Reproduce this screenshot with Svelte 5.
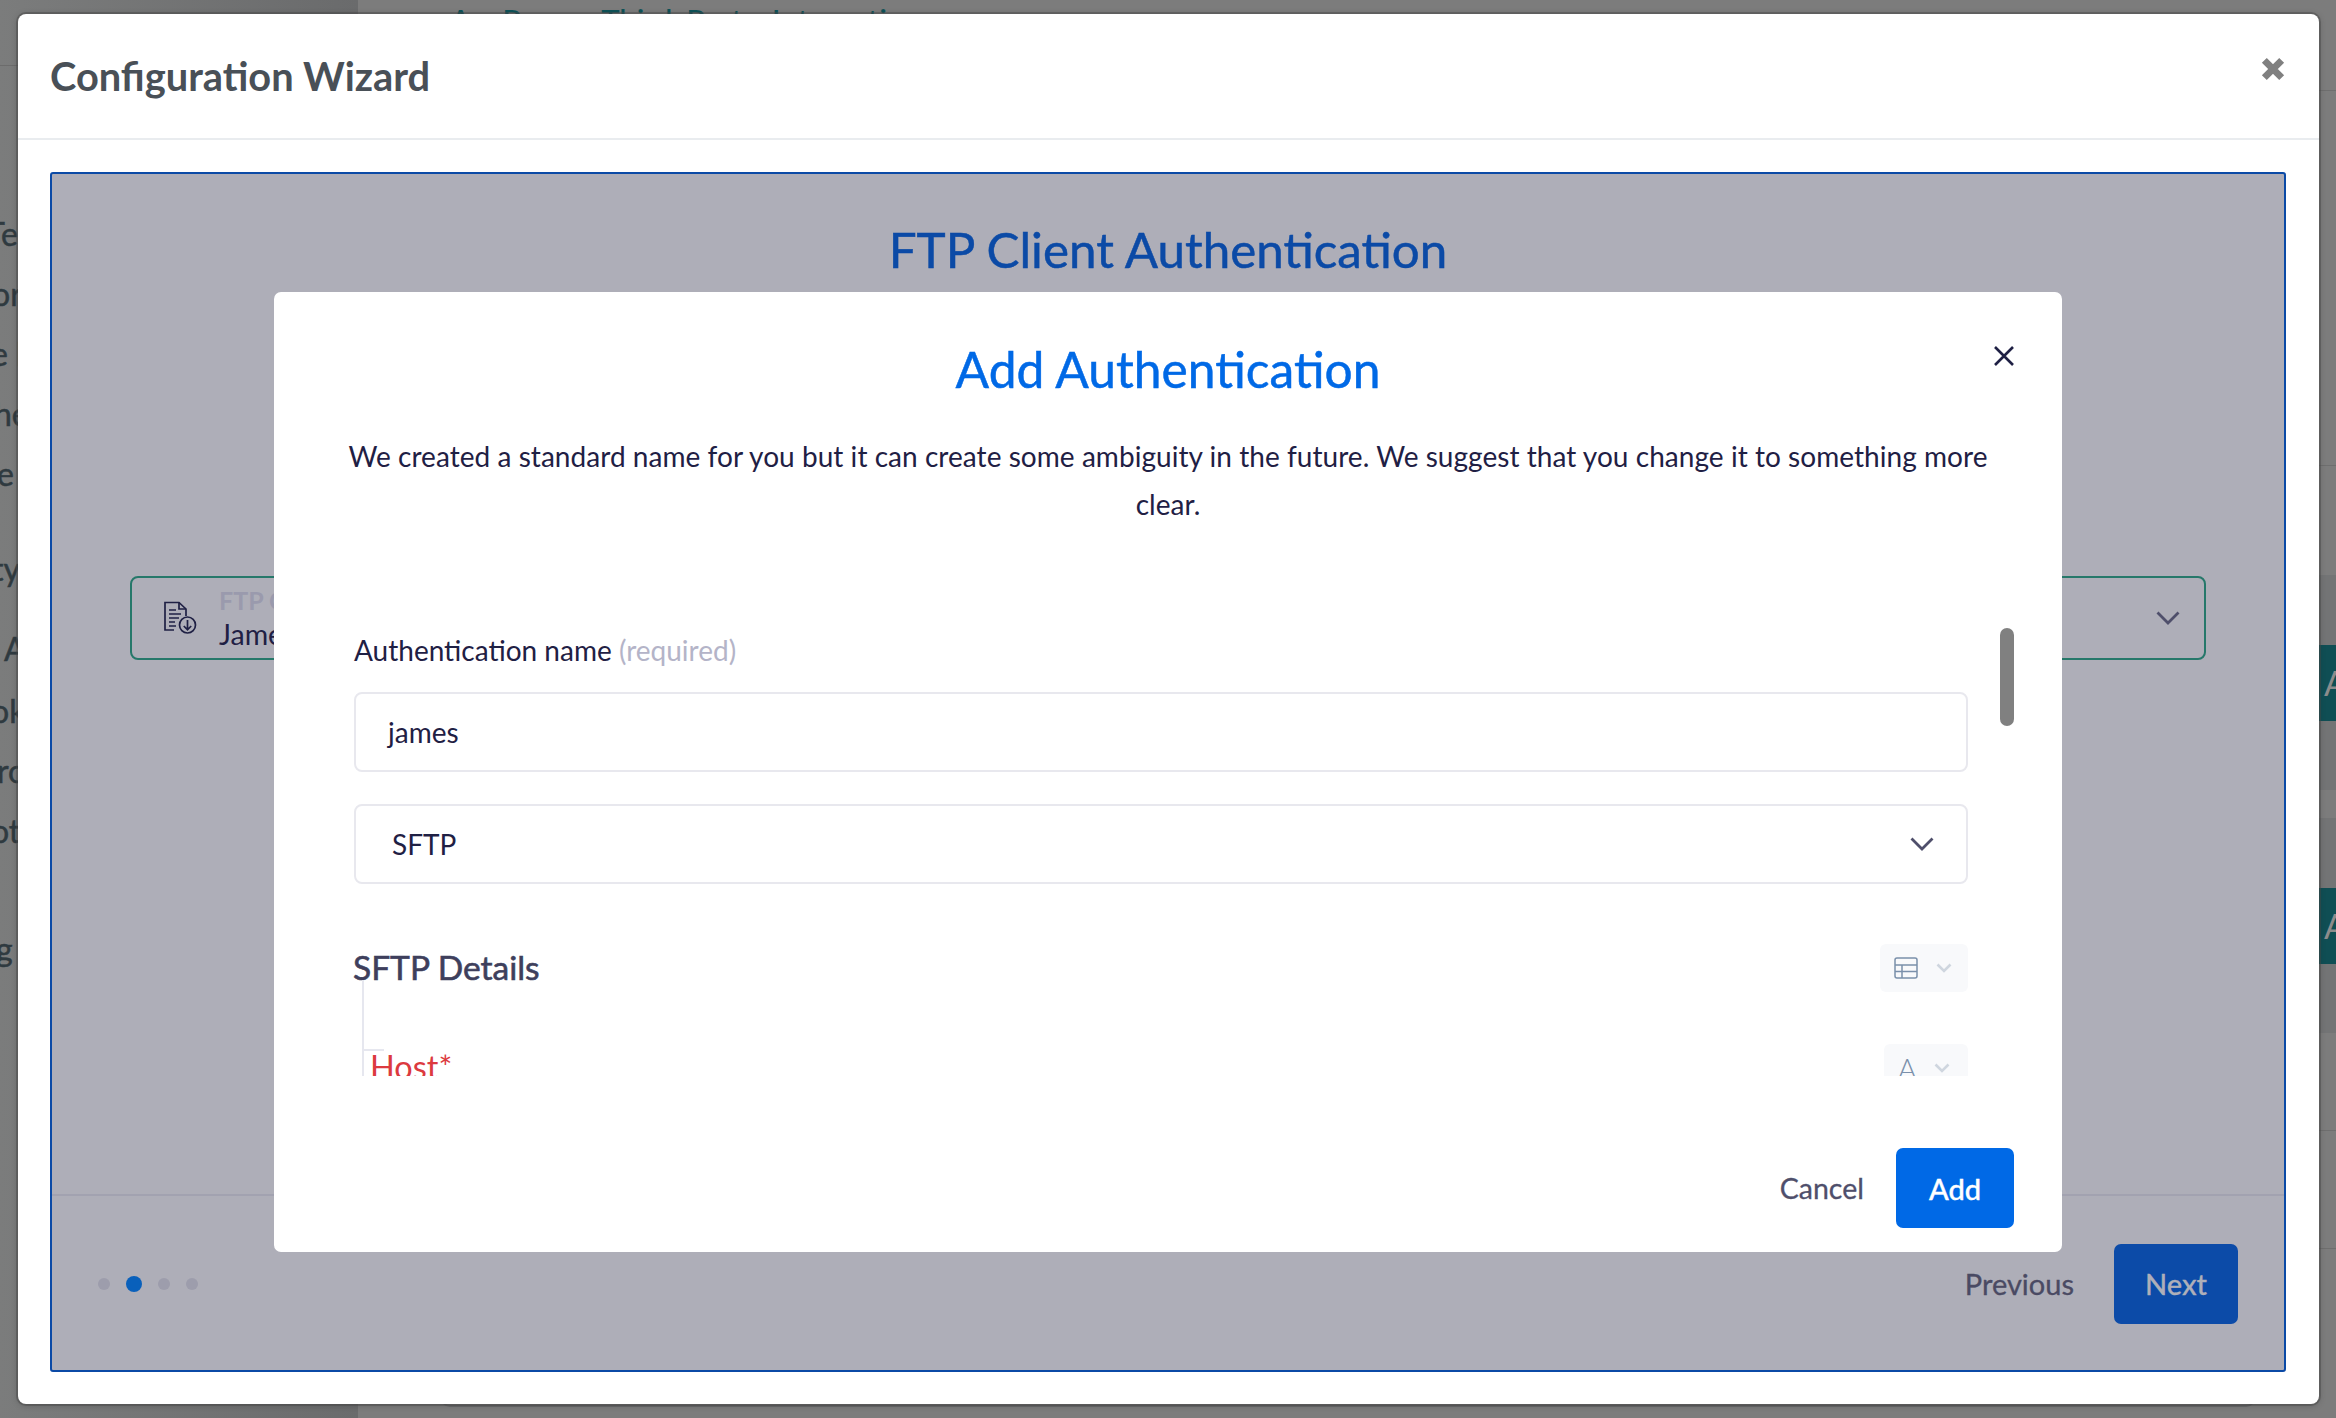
<script>
  const leftRows = [
    { text: 'Te', gap: 0, shift: -14 },
    { text: 'or', gap: 0, shift: -8 },
    { text: 'e l', gap: 0, shift: -9 },
    { text: 'he', gap: 0, shift: -6 },
    { text: 'e', gap: 0, shift: -3 },
    { text: 'ty', gap: 35, shift: -8 },
    { text: 'A', gap: 20, shift: 4 },
    { text: 'ok', gap: 2, shift: -9 },
    { text: 'ro', gap: 0, shift: -3 },
    { text: 'ot', gap: 0, shift: -9 },
    { text: 'g', gap: 58, shift: -4 }
  ];
  const dots = [false, true, false, false];
</script>

<div class="page">
  <div class="backdrop">
    <aside class="side">
      <div class="side-rule"></div>
      {#each leftRows as row}
        <div class="side-row" style="margin-top: {row.gap}px; margin-left: {row.shift}px">{row.text}</div>
      {/each}
    </aside>
    <main class="content">
      <div class="content-title">Ap Param Third Party Integration</div>
      <div class="content-card"></div>
    </main>
    <div class="right-strip">
      <div class="r-line r1"></div>
      <div class="r-line r2"></div>
      <div class="r-panel"><div class="r-btn">A</div></div>
      <div class="r-panel second"><div class="r-btn">A</div></div>
      <div class="r-line r3"></div>
      <div class="r-line r4"></div>
    </div>
  </div>

  <section class="wizard-modal">
    <header class="wizard-head">
      <h2>Configuration Wizard</h2>
      <svg class="wizard-close" viewBox="0 0 24 24" width="26" height="26">
        <path d="M4 4 L20 20 M20 4 L4 20" stroke="#808080" stroke-width="6.4" fill="none" />
      </svg>
    </header>
    <div class="wizard-body">
      <div class="wizard">
        <div class="wizard-main">
          <h1>FTP Client Authentication</h1>
          <div class="picker">
            <svg class="doc" viewBox="0 0 34 34" width="34" height="34" fill="none" stroke="#1f2044" stroke-width="1.7">
              <path d="M10 29 H1 V1.5 H15 L22 8 V15" />
              <path d="M15 1.5 V8 H22" />
              <path d="M5 9 H12 M5 13 H17 M5 17 H15 M5 21 H11 M5 25 H12" />
              <circle cx="23.5" cy="24" r="8" />
              <path d="M23.5 19 V28.5 M19.8 25 L23.5 28.8 L27.2 25" />
            </svg>
            <div class="picker-text">
              <span class="picker-label">FTP Client</span>
              <span class="picker-value">James</span>
            </div>
            <svg class="picker-chev" viewBox="0 0 24 14" width="24" height="14">
              <path d="M1.5 1.5 L12 12 L22.5 1.5" fill="none" stroke="#4f4f6b" stroke-width="2.8" />
            </svg>
          </div>
        </div>
        <footer class="wizard-foot">
          <div class="dots">
            {#each dots as on}
              <span class="dot" class:on></span>
            {/each}
          </div>
          <div class="foot-actions">
            <span class="prev">Previous</span>
            <button class="next">Next</button>
          </div>
        </footer>
      </div>
    </div>
  </section>

  <section class="auth-modal">
    <svg class="auth-close" viewBox="0 0 22 22" width="22" height="22">
      <path d="M2 2 L20 20 M20 2 L2 20" stroke="#1f2044" stroke-width="2.6" fill="none" />
    </svg>
    <h2 class="auth-title">Add Authentication</h2>
    <p class="auth-text">We created a standard name for you but it can create some ambiguity in the future. We suggest that you change it to something more clear.</p>

    <div class="scroll">
      <div class="thumb"></div>
      <div class="field-label">Authentication name <span class="req">(required)</span></div>
      <div class="input">james</div>
      <div class="input select">
        <span>SFTP</span>
        <svg viewBox="0 0 24 14" width="24" height="14">
          <path d="M1.5 1.5 L12 12 L22.5 1.5" fill="none" stroke="#4f4f6b" stroke-width="2.8" />
        </svg>
      </div>
      <div class="details-row">
        <h3>SFTP Details</h3>
        <div class="type-btn">
          <svg viewBox="0 0 24 22" width="24" height="22" fill="none" stroke="#7a90ab" stroke-width="1.5">
            <rect x="1" y="1" width="22" height="20" rx="2" />
            <path d="M1 8 H23 M1 14.5 H23 M8 8 V21" />
          </svg>
          <svg class="mini" viewBox="0 0 16 10" width="16" height="10">
            <path d="M1.5 1.5 L8 8 L14.5 1.5" fill="none" stroke="#cfd6df" stroke-width="2.6" />
          </svg>
        </div>
      </div>
      <div class="tree">
        <div class="host-row">
          <span class="host">Host*</span>
          <div class="type-btn small">
            <span class="type-a">A</span>
            <svg class="mini" viewBox="0 0 16 10" width="16" height="10">
              <path d="M1.5 1.5 L8 8 L14.5 1.5" fill="none" stroke="#cfd6df" stroke-width="2.6" />
            </svg>
          </div>
        </div>
      </div>
    </div>

    <div class="auth-foot">
      <span class="cancel">Cancel</span>
      <button class="add">Add</button>
    </div>
  </section>
</div>

<style>
  :global(body) {
    margin: 0;
    background: #7b7b7b;
  }

  .page {
    position: relative;
    width: 2336px;
    height: 1418px;
    overflow: hidden;
    font-family: Lato, "Open Sans", sans-serif;
    color: #1f2044;
  }

  .backdrop {
    display: flex;
    height: 100%;
    background: #7c7c7c;
  }

  .side {
    width: 358px;
    flex-shrink: 0;
    overflow: hidden;
    position: relative;
    box-sizing: border-box;
    padding-top: 204px;
    background: linear-gradient(90deg, #7b7c7c 0%, #6a6b6c 100%);
    color: #2f3a40;
    font-size: 32px;
    -webkit-text-stroke: 0.5px #2f3a40;
  }

  .side-rule {
    position: absolute;
    left: 0;
    right: 0;
    top: 65px;
    height: 1px;
    background: #6c6c6c;
  }

  .side-row {
    height: 60px;
    line-height: 60px;
  }

  .content {
    flex: 1;
    box-sizing: border-box;
    padding: 2px 0 0 92px;
    position: relative;
  }

  .content-title {
    color: #0d5258;
    font-size: 31px;
    line-height: 36px;
    font-weight: 500;
    word-spacing: 6px;
  }

  .content-card {
    position: absolute;
    left: 82px;
    right: 80px;
    top: 1300px;
    height: 107px;
    border: 2px solid #676869;
    border-radius: 10px;
    box-sizing: border-box;
  }

  .right-strip {
    position: absolute;
    left: 2319px;
    right: 0;
    top: 0;
    bottom: 0;
    overflow: hidden;
  }

  .r-line {
    position: absolute;
    left: 0;
    right: 0;
    height: 1px;
    background: #6e6e6e;
  }

  .r1 { top: 90px; }
  .r2 { top: 465px; }
  .r3 { top: 1130px; }
  .r4 { top: 1248px; }

  .r-panel {
    position: absolute;
    left: 0;
    right: 0;
    top: 575px;
    height: 215px;
    background: #737475;
    display: flex;
    align-items: center;
  }

  .r-panel.second {
    top: 818px;
  }

  .r-btn {
    width: 100%;
    height: 76px;
    background: #0f4e54;
    color: #8c8c8c;
    font-size: 34px;
    line-height: 76px;
    padding-left: 5px;
    box-sizing: border-box;
  }

  .wizard-modal {
    position: absolute;
    left: 18px;
    top: 14px;
    width: 2301px;
    height: 1390px;
    box-sizing: border-box;
    background: #fff;
    border-radius: 8px;
    box-shadow: 0 0 0 2px rgba(70, 70, 70, 0.45), 0 1px 6px rgba(40, 40, 40, 0.35);
    display: flex;
    flex-direction: column;
  }

  .wizard-head {
    height: 126px;
    flex-shrink: 0;
    box-sizing: border-box;
    border-bottom: 2px solid #e9ecef;
    position: relative;
    padding: 36px 33px 0 32px;
  }

  .wizard-head h2 {
    margin: 0;
    font-size: 39.8px;
    line-height: 52px;
    font-weight: 700;
    color: #495057;
  }

  .wizard-close {
    position: absolute;
    right: 33px;
    top: 42px;
  }

  .wizard-body {
    flex: 1;
    padding: 32px 33px 32px 32px;
    display: flex;
    min-height: 0;
  }

  .wizard {
    flex: 1;
    border: 2px solid #0b4aa6;
    border-radius: 3px;
    background: #aeaeb8;
    display: flex;
    flex-direction: column;
  }

  .wizard-main {
    flex: 1;
    padding: 45px 78px 0;
  }

  .wizard-main h1 {
    margin: 0;
    text-align: center;
    font-size: 49.3px;
    line-height: 60px;
    font-weight: 400;
    color: #0b4aa6;
    -webkit-text-stroke: 0.5px #0b4aa6;
  }

  .picker {
    margin-top: 297px;
    height: 84px;
    box-sizing: border-box;
    border: 2px solid #26786a;
    border-radius: 8px;
    display: flex;
    align-items: center;
    padding: 0 24px 0 32px;
  }

  .doc {
    flex-shrink: 0;
  }

  .picker-text {
    flex: 1;
    margin-left: 21px;
    display: flex;
    flex-direction: column;
    line-height: 1;
  }

  .picker-label {
    font-size: 25px;
    font-weight: 700;
    color: #9a9aad;
    margin-bottom: 7px;
  }

  .picker-value {
    font-size: 28.5px;
    color: #1f2044;
  }

  .wizard-foot {
    height: 176px;
    flex-shrink: 0;
    box-sizing: border-box;
    border-top: 2px solid #a2a2b0;
    display: flex;
    align-items: center;
    justify-content: space-between;
    padding: 2px 46px 0;
  }

  .dots {
    display: flex;
    align-items: center;
    gap: 16px;
  }

  .dot {
    width: 12px;
    height: 12px;
    border-radius: 50%;
    background: #9d9dac;
  }

  .dot.on {
    width: 16px;
    height: 16px;
    background: #0960bb;
  }

  .foot-actions {
    display: flex;
    align-items: center;
    gap: 40px;
  }

  .prev {
    font-size: 29px;
    margin-top: -2px;
    color: #4a4a63;
    -webkit-text-stroke: 0.3px #4a4a63;
  }

  .next {
    width: 124px;
    height: 80px;
    border: 0;
    padding: 0 0 2px;
    border-radius: 7px;
    background: #0c4ba8;
    color: #aeafb9;
    font: 500 29px Lato, sans-serif;
    -webkit-text-stroke: 0.3px #aeafb9;
  }

  .auth-modal {
    position: absolute;
    left: 274px;
    top: 292px;
    width: 1788px;
    height: 960px;
    box-sizing: border-box;
    background: #fff;
    border-radius: 7px;
    display: flex;
    flex-direction: column;
  }

  .auth-close {
    position: absolute;
    left: 1719px;
    top: 53px;
  }

  .auth-title {
    margin: 48px 0 0;
    text-align: center;
    font-size: 49.7px;
    line-height: 58px;
    font-weight: 400;
    color: #0069e6;
    -webkit-text-stroke: 0.5px #0069e6;
  }

  .auth-text {
    margin: 34px 46px 0;
    text-align: center;
    font-size: 28px;
    line-height: 48px;
    letter-spacing: 0.045px;
    color: #1f2044;
  }

  .scroll {
    position: relative;
    height: 456px;
    margin-top: 92px;
    padding: 0 94px 0 80px;
    overflow: hidden;
  }

  .thumb {
    position: absolute;
    left: 1726px;
    top: 8px;
    width: 14px;
    height: 98px;
    border-radius: 7px;
    background: #808080;
  }

  .field-label {
    font-size: 28px;
    line-height: 40px;
    margin-top: 10px;
  }

  .req {
    color: #b4b4c8;
  }

  .input {
    margin-top: 22px;
    height: 80px;
    box-sizing: border-box;
    border: 2px solid #e8e8ee;
    border-radius: 8px;
    padding: 0 32px;
    display: flex;
    align-items: center;
    font-size: 28px;
  }

  .select {
    margin-top: 32px;
    padding: 0 32px 0 36px;
    justify-content: space-between;
  }

  .details-row {
    margin-top: 60px;
    display: flex;
    align-items: center;
    justify-content: space-between;
  }

  .details-row h3 {
    margin: -2px 0 0 -1px;
    font-size: 33.5px;
    font-weight: 400;
    color: #3e3f5c;
    -webkit-text-stroke: 0.6px #3e3f5c;
  }

  .type-btn {
    width: 88px;
    height: 48px;
    box-sizing: border-box;
    background: #f8f9fb;
    border-radius: 6px;
    display: flex;
    align-items: center;
    padding-left: 14px;
    gap: 18px;
  }

  .type-btn.small {
    width: 84px;
    padding-left: 16px;
  }

  .type-a {
    font-size: 28px;
    font-weight: 300;
    color: #7a90ab;
    width: 16px;
    margin-left: -2px;
    margin-right: 2px;
  }

  .tree {
    margin-left: 8px;
    border-left: 2px solid #e6e7ef;
    height: 120px;
    margin-top: -12px;
    padding-top: 64px;
    box-sizing: border-box;
    position: relative;
  }

  .tree::before {
    content: '';
    position: absolute;
    left: 0;
    top: 69px;
    width: 20px;
    height: 2px;
    background: #e6e7ef;
  }

  .host-row {
    display: flex;
    align-items: flex-start;
    justify-content: space-between;
  }

  .host {
    font-size: 32.5px;
    line-height: 44px;
    margin: 1px 0 0 6px;
    color: #dc3a3f;
  }

  .auth-foot {
    margin-top: auto;
    padding: 0 48px 24px 0;
    display: flex;
    align-items: center;
    justify-content: flex-end;
    gap: 32px;
  }

  .cancel {
    font-size: 28.5px;
    color: #4f4f6b;
    -webkit-text-stroke: 0.3px #4f4f6b;
  }

  .add {
    width: 118px;
    height: 80px;
    border: 0;
    border-radius: 7px;
    background: #0069e6;
    color: #fff;
    font: 500 29px Lato, sans-serif;
    -webkit-text-stroke: 0.4px #fff;
  }
</style>
